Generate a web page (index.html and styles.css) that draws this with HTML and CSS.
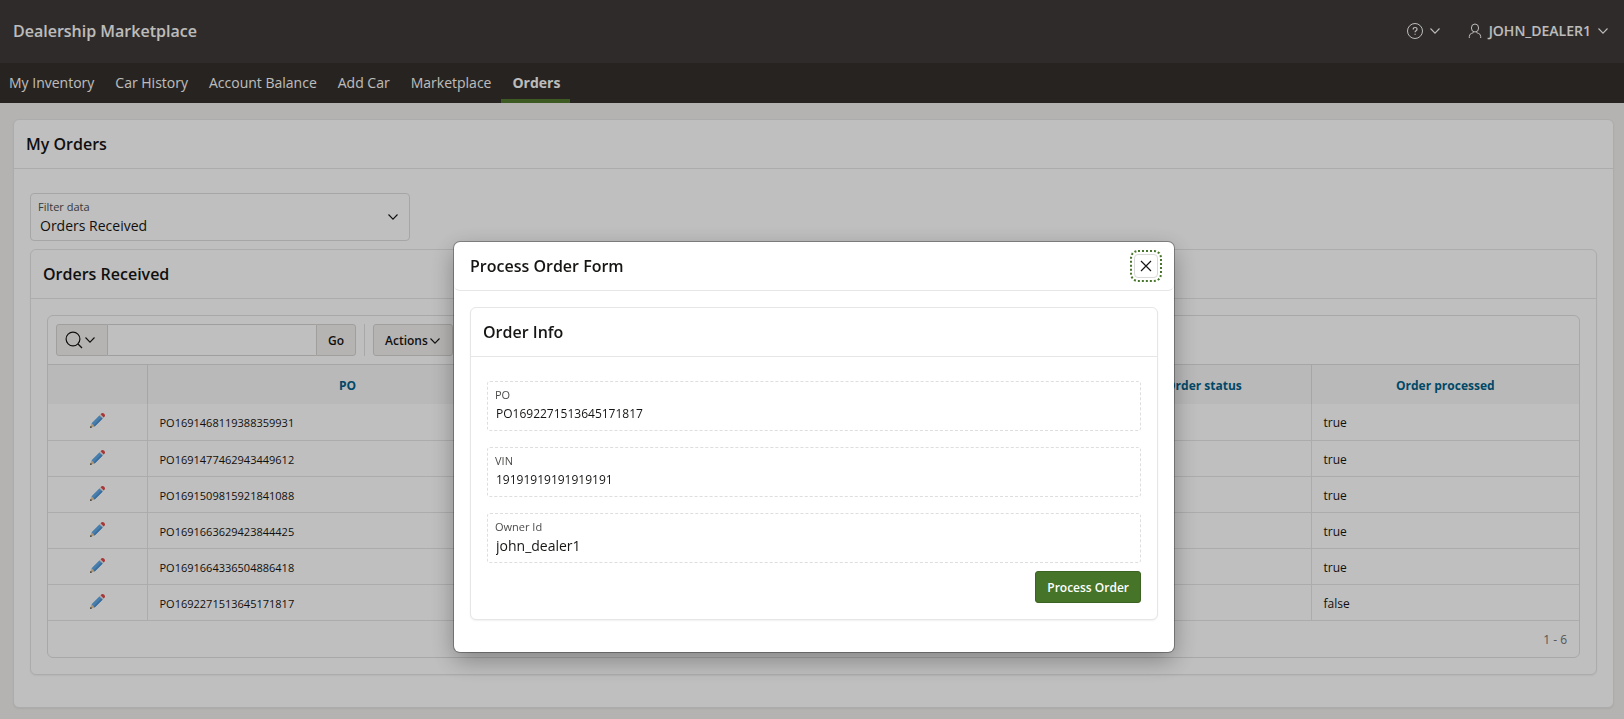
FILE: index.html
```html
<!DOCTYPE html>
<html lang="en">
<head>
<meta charset="utf-8">
<meta name="viewport" content="width=device-width, initial-scale=1">
<title>Dealership Marketplace</title>
<link rel="stylesheet" href="styles.css">
</head>
<body>
<svg class="sprite" aria-hidden="true">
  <symbol id="chevron" viewBox="0 0 12 12"><path d="M1.500 3.500 6 8.200l4.500-4.700" fill="none" stroke="currentColor" stroke-width="1.100"/></symbol>
  <symbol id="pencil" viewBox="0 0 18 18">
    <path d="M1 17l1.700-5 3.300 3.300z" fill="#e8c99a"/>
    <path d="M1 17l.8-2.300 1.500 1.500z" fill="#333"/>
    <path d="M2.700 12 11.200 3.500l3.300 3.300L6 15.300z" fill="#5fa8e6"/>
    <path d="M4.800 14.200 13.400 5.600l1.100 1.200L6 15.300z" fill="#4c90d0"/>
    <path d="M11.200 3.500l1.300-1.300 3.300 3.300-1.300 1.300z" fill="#e6e6e6"/>
    <path d="M12.300 2.400l1-1q1.200-1 2.500.3l.5.500q1.300 1.300.3 2.500l-1 1z" fill="#e04848"/>
  </symbol>
</svg>

<header class="header">
  <a class="logo" href="#">Dealership Marketplace</a>
  <div class="header-nav">
    <button class="header-button" type="button" aria-label="Help">
      <svg class="icon-md" viewBox="0 0 16 16" fill="none" stroke="currentColor"><circle cx="8" cy="8" r="7.500"/><path d="M6.200 6.500q0-2 1.900-2t1.900 1.700q0 1-1 1.600-.9.500-.9 1.500M8.100 10.700v1.100" stroke-width="1.200"/></svg>
      <svg class="icon-sm"><use href="#chevron"/></svg>
    </button>
    <button class="header-button" type="button">
      <svg class="icon-md" viewBox="0 0 16 16" fill="none" stroke="currentColor"><ellipse cx="8" cy="5" rx="3.600" ry="4"/><path d="M2.300 15v-1.500q0-2.500 2.400-3.200l2-.8M13.700 15v-1.500q0-2.500-2.400-3.200l-2-.8"/></svg>
      <span class="user-name">JOHN_DEALER1</span>
      <svg class="icon-sm"><use href="#chevron"/></svg>
    </button>
  </div>
</header>

<nav class="tabs">
  <a class="tab" href="#">My Inventory</a>
  <a class="tab" href="#">Car History</a>
  <a class="tab" href="#">Account Balance</a>
  <a class="tab" href="#">Add Car</a>
  <a class="tab" href="#">Marketplace</a>
  <a class="tab tab-current" href="#" aria-current="page">Orders</a>
</nav>

<main class="page">
  <section class="region">
    <h1 class="region-title">My Orders</h1>
    <div class="region-body">
      <div class="filter">
        <label class="field-label" for="filter">Filter data</label>
        <select class="filter-select" id="filter"><option>Orders Received</option></select>
        <svg class="filter-arrow"><use href="#chevron"/></svg>
      </div>
      <section class="region">
        <h2 class="region-title">Orders Received</h2>
        <div class="report-wrap">
          <div class="report">
            <div class="toolbar">
              <div class="search">
                <button class="button search-menu" type="button" aria-label="Select columns to search">
                  <svg class="icon-lg" viewBox="0 0 18 18" fill="none" stroke="currentColor" stroke-width="1.200"><circle cx="8" cy="8" r="6.900"/><path d="M13 13l4 4"/></svg>
                  <svg class="icon-sm"><use href="#chevron"/></svg>
                </button>
                <input class="search-input" type="text" aria-label="Search">
                <button class="button search-go" type="button">Go</button>
              </div>
              <div class="toolbar-actions">
                <button class="button" type="button">Actions <svg class="icon-sm"><use href="#chevron"/></svg></button>
              </div>
            </div>
            <table class="table">
              <colgroup><col class="col-edit"><col class="col-po"><col><col class="col-status"><col class="col-processed"></colgroup>
              <thead><tr><th></th><th>PO</th><th></th><th>Order status</th><th>Order processed</th></tr></thead>
              <tbody>
                <tr><td class="edit"><a href="#" aria-label="Edit"><svg class="pencil"><use href="#pencil"/></svg></a></td><td class="number">PO1691468119388359931</td><td></td><td></td><td>true</td></tr>
                <tr><td class="edit"><a href="#" aria-label="Edit"><svg class="pencil"><use href="#pencil"/></svg></a></td><td class="number">PO1691477462943449612</td><td></td><td></td><td>true</td></tr>
                <tr><td class="edit"><a href="#" aria-label="Edit"><svg class="pencil"><use href="#pencil"/></svg></a></td><td class="number">PO1691509815921841088</td><td></td><td></td><td>true</td></tr>
                <tr><td class="edit"><a href="#" aria-label="Edit"><svg class="pencil"><use href="#pencil"/></svg></a></td><td class="number">PO1691663629423844425</td><td></td><td></td><td>true</td></tr>
                <tr><td class="edit"><a href="#" aria-label="Edit"><svg class="pencil"><use href="#pencil"/></svg></a></td><td class="number">PO1691664336504886418</td><td></td><td></td><td>true</td></tr>
                <tr><td class="edit"><a href="#" aria-label="Edit"><svg class="pencil"><use href="#pencil"/></svg></a></td><td class="number">PO1692271513645171817</td><td></td><td></td><td>false</td></tr>
              </tbody>
            </table>
            <div class="pagination">1 - 6</div>
          </div>
        </div>
      </section>
    </div>
  </section>
</main>

<div class="overlay">
  <section class="dialog" role="dialog" aria-modal="true" aria-labelledby="dialog-title">
    <header class="dialog-header">
      <h2 class="dialog-title" id="dialog-title">Process Order Form</h2>
      <button class="close" type="button" aria-label="Close"><svg class="icon-sm" viewBox="0 0 12 12" fill="none" stroke="currentColor" stroke-width="1.200"><path d="M1 1l10 10M11 1L1 11"/></svg></button>
    </header>
    <div class="dialog-body">
      <section class="region">
        <h3 class="region-title">Order Info</h3>
        <form class="form">
          <div class="field"><label class="field-label" for="po">PO</label><input class="field-value number-value" id="po" readonly value="PO1692271513645171817"></div>
          <div class="field"><label class="field-label" for="vin">VIN</label><input class="field-value number-value" id="vin" readonly value="19191919191919191"></div>
          <div class="field"><label class="field-label" for="owner">Owner Id</label><input class="field-value" id="owner" readonly value="john_dealer1"></div>
          <button class="button button-hot" type="button">Process Order</button>
        </form>
      </section>
    </div>
  </section>
</div>
</body>
</html>
```
FILE: styles.css
```css
* { box-sizing: border-box; }

body {
  margin: 0;
  min-height: 100vh;
  background: #f1efed;
  color: #161513;
  font: 14px/20px "Open Sans", "Noto Sans", sans-serif;
}

h1, h2, h3 { margin: 0; }
a { color: inherit; text-decoration: none; }
button, input, select { font: inherit; color: inherit; margin: 0; }
svg { display: block; flex: none; }

.sprite { position: absolute; width: 0; height: 0; }
.icon-sm { width: 12px; height: 12px; }
.icon-md { width: 16px; height: 16px; }
.icon-lg { width: 18px; height: 18px; }

.header {
  display: flex;
  align-items: center;
  justify-content: space-between;
  height: 63px;
  padding: 0 15px 2px 13px;
  background: #3f3a39;
  color: #fcfbfa;
}
.logo { font-size: 16px; font-weight: 600; }
.header-nav { display: flex; gap: 26px; }
.header-button {
  display: flex;
  align-items: center;
  gap: 6px;
  padding: 0;
  border: 0;
  background: none;
}
.user-name { font-weight: 600; }

.tabs {
  display: flex;
  height: 40px;
  background: #332f2b;
  color: #fcfbfa;
}
.tab {
  display: flex;
  align-items: center;
  padding: 4px 10px 0 11px;
  border-bottom: 4px solid transparent;
}
.tab:first-child { padding-left: 9px; }
.tab.tab-current { border-color: #52782f; font-weight: 700; }

.page { padding: 16px 10px 10px 13px; }

.region {
  border: 1px solid #e6e6e6;
  border-radius: 6px;
  background: #fff;
  box-shadow: 0 1px 2px rgba(0, 0, 0, .06);
}
.region-title {
  padding: 12px;
  border-bottom: 1px solid #e6e6e6;
  font-size: 16px;
  line-height: 24px;
  font-weight: 600;
}
.region-body { padding: 24px 16px 32px; }

.filter {
  position: relative;
  width: 380px;
  max-width: 100%;
  margin-bottom: 8px;
  border: 1px solid #dedede;
  border-radius: 4px;
}
.field-label {
  display: block;
  padding: 5px 7px 0;
  font-size: 11px;
  line-height: 16px;
  color: #4d4c4b;
}
.filter-select {
  display: block;
  width: 100%;
  height: 25px;
  padding: 0 32px 4px 9px;
  border: 0;
  background: none;
  appearance: none;
}
.filter-arrow {
  position: absolute;
  top: 50%;
  right: 10px;
  width: 12px;
  height: 12px;
  margin-top: -6px;
  pointer-events: none;
}

.report-wrap { padding: 16px; }
.report {
  border: 1px solid #e0e0e0;
  border-radius: 6px;
  overflow: hidden;
}
.toolbar {
  display: flex;
  gap: 8px;
  padding: 8px;
  border-bottom: 1px solid #dedede;
}
.button {
  display: flex;
  align-items: center;
  justify-content: center;
  gap: 1px;
  height: 32px;
  padding: 1px 11px 0;
  border: 1px solid #d6d4d2;
  border-radius: 3px;
  background: #f3f1ef;
  font-size: 12px;
  line-height: 16px;
  font-weight: 600;
}
.search { display: flex; width: 300px; }
.search-menu { width: 52px; padding: 0 3px 0 0; border-radius: 3px 0 0 3px; }
.search-input {
  flex: 1;
  min-width: 0;
  padding: 0 8px;
  border: 1px solid #d6d4d2;
  border-width: 1px 0;
  background: #fff;
}
.search-go { width: 40px; padding: 1px 0 0; border-radius: 0 3px 3px 0; }
.toolbar-actions { padding-left: 8px; border-left: 1px solid #e0e0e0; }

.table {
  width: 100%;
  border-collapse: collapse;
  table-layout: fixed;
  font-size: 12px;
  line-height: 16px;
}
.col-edit { width: 99px; }
.col-po { width: 26.2%; }
.col-status { width: 14%; }
.col-processed { width: 17.5%; }
.table th {
  height: 39px;
  padding: 2px 12px 0;
  background: #f7f7f7;
  color: #00618a;
  font-weight: 700;
}
.table td {
  height: 36px;
  padding: 3px 12px 0;
  border-bottom: 1px solid #e6e6e6;
}
.table th + th { border-left: 1px solid #dedede; }
.table td + td { border-left: 1px solid #e6e6e6; }
.table .number { font-size: 11px; }
.table .edit { padding: 0 0 2px; }
.pencil { width: 17px; height: 17px; margin: 0 auto; }
.pagination {
  padding: 11px 12px 9px;
  font-size: 12px;
  line-height: 16px;
  text-align: right;
  color: #737271;
}

.overlay {
  position: fixed;
  inset: 0;
  display: flex;
  align-items: flex-start;
  justify-content: center;
  padding: 242px 0 0 4px;
  background: rgba(0, 0, 0, .25);
}
.dialog {
  width: 720px;
  max-width: 100%;
  border-radius: 6px;
  background: #fff;
  box-shadow: 0 0 0 1px rgba(0, 0, 0, .3), 0 8px 24px rgba(0, 0, 0, .32);
}
.dialog-header {
  display: flex;
  align-items: center;
  justify-content: space-between;
  height: 49px;
  padding: 0 16px;
  border-bottom: 1px solid #e6e6e6;
  border-radius: 6px;
}
.dialog-title { font-size: 16px; line-height: 24px; font-weight: 600; }
.close {
  display: grid;
  place-items: center;
  width: 24px;
  height: 24px;
  padding: 0;
  border: 1px solid #d9d9d9;
  border-radius: 4px;
  background: #fff;
  outline: 2px dotted #47752a;
  outline-offset: 2px;
}
.dialog-body { padding: 16px 16px 32px; }

.form {
  display: flex;
  flex-direction: column;
  padding: 24px 16px 16px;
}
.field {
  margin-bottom: 16px;
  border: 1px dashed #dedede;
  border-radius: 3px;
}
.field:last-of-type { margin-bottom: 8px; }
.field-value {
  display: block;
  width: 100%;
  height: 27px;
  padding: 0 8px 6px;
  border: 0;
  background: none;
  outline: 0;
}
.number-value { font-size: 12px; }
.button-hot {
  align-self: flex-end;
  border-color: #3c6322;
  background: #467428;
  color: #fff;
}
```
